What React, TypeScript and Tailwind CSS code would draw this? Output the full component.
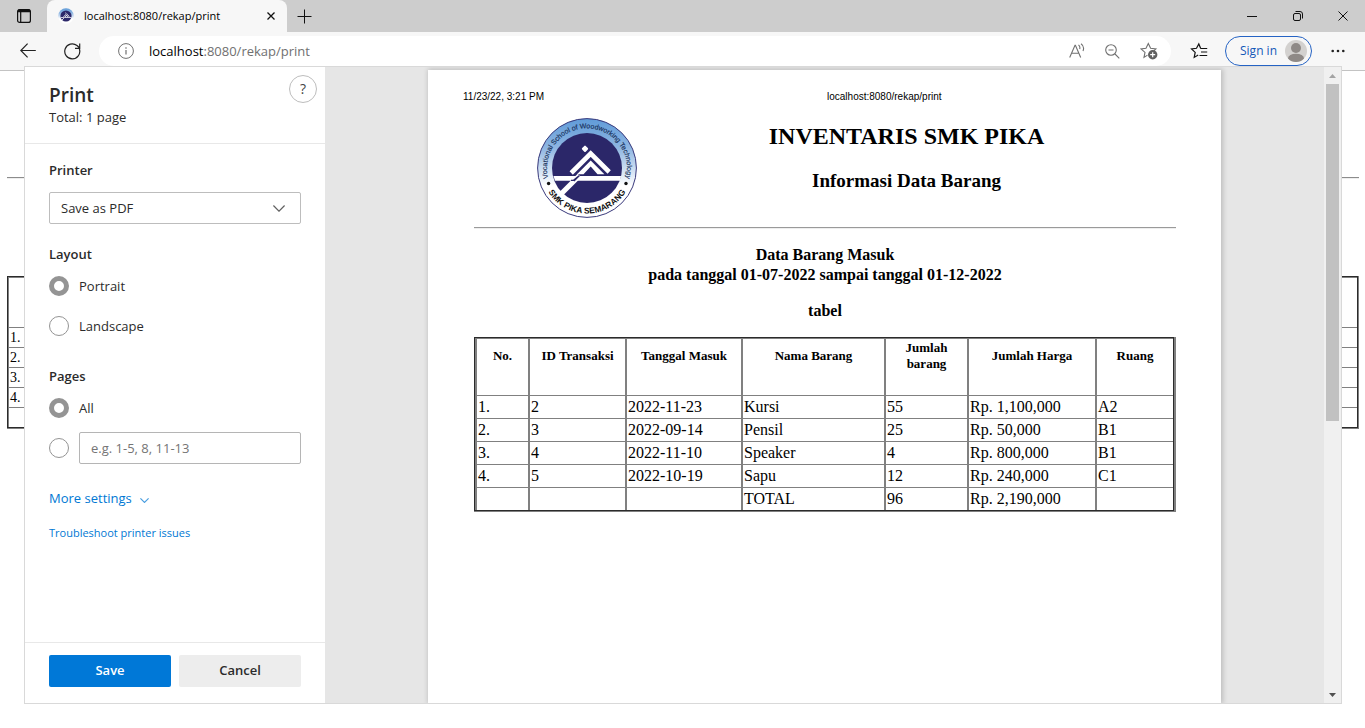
import React from "react";

const rows = [
  ["1.", "2", "2022-11-23", "Kursi", "55", "Rp. 1,100,000", "A2"],
  ["2.", "3", "2022-09-14", "Pensil", "25", "Rp. 50,000", "B1"],
  ["3.", "4", "2022-11-10", "Speaker", "4", "Rp. 800,000", "B1"],
  ["4.", "5", "2022-10-19", "Sapu", "12", "Rp. 240,000", "C1"],
  ["", "", "", "TOTAL", "96", "Rp. 2,190,000", ""],
];

const headings = [
  "No.",
  "ID Transaksi",
  "Tanggal Masuk",
  "Nama Barang",
  "Jumlah barang",
  "Jumlah Harga",
  "Ruang",
];

const columnWidths = [
  "w-[53px]",
  "w-[97px]",
  "w-[116px]",
  "w-[143px]",
  "w-[83px]",
  "w-[128px]",
  "w-[78px]",
];

function Emblem() {
  return (
    <g>
      <circle cx="50" cy="50" r="35" fill="#2b2769" />
      <path d="M16.5 58h67.5l-1 4.800h-65z" fill="#fff" />
      <path d="M42.500 57.500 24 76" stroke="#fff" strokeWidth="5.200" fill="none" />
      <path d="M34 62.300h2.500L42 57.700M37 63.200l5.500-5.500" stroke="#2b2769" strokeWidth="1.200" fill="none" />
      <path d="M34.200 55 53.700 35.500 72.200 54" stroke="#fff" strokeWidth="4.600" fill="none" />
      <path d="M40 56.200 53.700 42.500 67.400 56.200H60.500L53.700 48.500 46.500 56.200z" fill="#fff" />
      <rect x="45.500" y="28.300" width="5" height="5" rx="1" transform="rotate(45 48 30.800)" fill="#fff" />
    </g>
  );
}

function SchoolLogo() {
  return (
    <svg viewBox="0 0 100 100" className="size-[100px] shrink-0" role="img" aria-label="SMK PIKA Semarang">
      <defs>
        <linearGradient id="ring" x1="0" y1="0" x2="0" y2="1">
          <stop offset="0" stopColor="#5f9bd8" />
          <stop offset="0.3" stopColor="#8fb6e2" />
          <stop offset="0.68" stopColor="#fff" />
        </linearGradient>
        <path id="arc-top" d="M11.500 61.200A40 40 0 1 1 88.500 61.200" />
        <path id="arc-bottom" d="M8.200 68A45.500 45.500 0 0 0 91.800 68" />
      </defs>
      <circle cx="50" cy="50" r="49.400" fill="url(#ring)" stroke="#3a3a7c" strokeWidth="1" />
      <Emblem />
      <text fontFamily="Liberation Sans, sans-serif" fontSize="7" fill="#17305a" stroke="#17305a" strokeWidth="0.150">
        <textPath href="#arc-top" startOffset="50%" textAnchor="middle">
          Vocational School of Woodworking Technology
        </textPath>
      </text>
      <text fontFamily="Liberation Sans, sans-serif" fontSize="8.400" fontWeight="bold" fill="#111">
        <textPath href="#arc-bottom" startOffset="50%" textAnchor="middle">
          SMK PIKA SEMARANG
        </textPath>
      </text>
      <circle cx="11.600" cy="65.500" r="1.700" fill="#111" />
      <circle cx="89" cy="65.500" r="1.700" fill="#111" />
    </svg>
  );
}

function TitleBar() {
  return (
    <header className="flex h-8 bg-[#cdcdcd] text-black">
      <button aria-label="Tab actions" className="flex w-[47px] items-center justify-center">
        <svg viewBox="0 0 14 14" className="size-[14px]" fill="none" stroke="#111" strokeWidth="1.200">
          <rect x="0.600" y="0.600" width="12.800" height="12.800" rx="2" />
          <path d="M1 2.300h12M1 1.300h12" strokeWidth="1.800" />
          <path d="M3.700 3v10.500" />
        </svg>
      </button>
      <div className="flex w-60 items-center rounded-t-lg bg-[#f7f7f7] pl-[11px] pr-2">
        <svg viewBox="0 0 100 100" className="size-4" aria-hidden="true">
          <circle cx="50" cy="50" r="49" fill="url(#ring)" />
          <Emblem />
        </svg>
        <span className="ml-2.5 flex-1 text-[11px]">localhost:8080/rekap/print</span>
        <button aria-label="Close tab" className="flex size-4 items-center justify-center">
          <svg viewBox="0 0 8 8" className="size-2" stroke="#111" strokeWidth="1.300">
            <path d="M.5.5l7 7M7.500.5l-7 7" />
          </svg>
        </button>
      </div>
      <button aria-label="New tab" className="flex w-[34px] items-center justify-center">
        <svg viewBox="0 0 15 15" className="size-[15px]" stroke="#111" strokeWidth="1">
          <path d="M7.500.5v14M.5 7.500h14" />
        </svg>
      </button>
      <div className="flex flex-1 justify-end">
        <button aria-label="Minimize" className="flex w-[46px] items-center justify-center">
          <svg viewBox="0 0 10 10" className="size-[10px]" stroke="#111">
            <path d="M0 5.500h10" />
          </svg>
        </button>
        <button aria-label="Restore" className="flex w-[46px] items-center justify-center">
          <svg viewBox="0 0 10 10" className="size-[10px]" fill="none" stroke="#111">
            <rect x="0.500" y="2.500" width="7" height="7" rx="1.500" />
            <path d="M2.500.5h4.500a2.500 2.500 0 0 1 2.500 2.500v4.500" />
          </svg>
        </button>
        <button aria-label="Close window" className="flex w-11 items-center justify-center">
          <svg viewBox="0 0 10 10" className="size-[10px]" stroke="#111">
            <path d="M.5.5l9 9M9.500.5l-9 9" />
          </svg>
        </button>
      </div>
    </header>
  );
}

function Toolbar() {
  return (
    <nav className="flex h-[39px] items-start border-b border-[#c3c3c3] bg-[#f7f7f7] pt-1">
      <button aria-label="Back" className="ml-3 flex h-[30px] w-8 items-center justify-center">
        <svg viewBox="0 0 16 16" className="size-4" fill="none" stroke="#222" strokeWidth="1.200">
          <path d="M15.800 7.500H.8M7.600.7.8 7.500l6.800 6.800" />
        </svg>
      </button>
      <button aria-label="Refresh" className="ml-3 flex h-[30px] w-8 items-center justify-center">
        <svg viewBox="0 0 17 17" className="size-[17px]" fill="none" stroke="#222" strokeWidth="1.200">
          <path d="M15.400 6A7.500 7.500 0 1 1 13 2.500L15.500 4.800M15.700.5V5.300H11" />
        </svg>
      </button>
      <div className="ml-[11px] flex h-[30px] flex-1 items-center rounded-full bg-white pl-[19px] pr-[13px]">
        <svg viewBox="0 0 16 16" className="size-4" fill="none" stroke="#707070" strokeWidth="1">
          <circle cx="8" cy="8" r="7.400" />
          <path d="M8 7v4.500M8 4.300v1.400" strokeWidth="1.200" />
        </svg>
        <div role="textbox" aria-label="Address" className="ml-[15px] flex-1 text-[13px] leading-5 text-[#707070]">
          <span className="text-black">localhost</span>:8080/rekap/print
        </div>
        <div className="flex items-center gap-5 text-[#707070]">
          <button aria-label="Read aloud">
            <svg viewBox="0 0 16 16" className="size-4" fill="none" stroke="currentColor" strokeWidth="1.100">
              <path d="M.7 14.500 6 2.200h.4l5.300 12.300M2.700 10.200h7" />
              <path d="M9.500 1.800c1.200 1 1.700 2.600 1.200 4.300M12 .7c2.400 1.700 3 4.800 2 7.300" />
            </svg>
          </button>
          <button aria-label="Zoom out">
            <svg viewBox="0 0 15 15" className="size-[15px]" fill="none" stroke="currentColor" strokeWidth="1.100">
              <circle cx="6" cy="6" r="5.300" />
              <path d="M3.500 6h5M10 10l4.300 4.300" />
            </svg>
          </button>
          <button aria-label="Add to favorites">
            <svg viewBox="0 0 18 18" className="size-[18px]" fill="none" stroke="currentColor" strokeWidth="1.100">
              <path d="M7.500 13.100 4 15.400l1-5L1 6.900l5-.6L8.300 1.600l2.300 4.700 5.300.6-2 2" />
              <circle cx="12.700" cy="12.700" r="4.700" fill="#606060" stroke="none" />
              <path d="M12.700 10.200v5M10.200 12.700h5" stroke="#fff" strokeWidth="1.200" />
            </svg>
          </button>
        </div>
      </div>
      <button aria-label="Favorites" className="ml-[19px] flex h-[30px] w-[18px] items-center">
        <svg viewBox="0 0 18 18" className="size-[18px]" fill="none" stroke="#111" strokeWidth="1.200">
          <path d="M10.600 6.300 8.800 1.900 6.500 6.300 1.500 7l3.700 3.400-1 5L8.200 13" />
          <path d="M10.300 6.500h6.900M11 10h6.200M9.500 13.500h7.700" />
        </svg>
      </button>
      <button className="ml-[17px] flex h-[30px] w-[87px] items-center justify-between rounded-full border border-[#2563c4] pl-3.5 pr-1 text-xs text-[#1457b8]">
        <span>Sign in</span>
        <svg viewBox="0 0 22 22" className="size-[22px]" aria-hidden="true">
          <defs>
            <clipPath id="avatar-clip">
              <circle cx="11" cy="11" r="11" />
            </clipPath>
          </defs>
          <g clipPath="url(#avatar-clip)">
            <rect width="22" height="22" fill="#d3d1cf" />
            <circle cx="11" cy="8" r="5" fill="#8e8986" />
            <ellipse cx="11" cy="18.500" rx="8" ry="4.800" fill="#8e8986" />
          </g>
        </svg>
      </button>
      <button aria-label="Settings and more" className="mr-3 flex h-[30px] w-[41px] items-center justify-end">
        <svg viewBox="0 0 14 4" className="mr-2 h-1 w-[14px]" fill="#222">
          <circle cx="1.700" cy="2" r="1.300" />
          <circle cx="7" cy="2" r="1.300" />
          <circle cx="12.300" cy="2" r="1.300" />
        </svg>
      </button>
    </nav>
  );
}

function PageBehind() {
  return (
    <main className="flex-1 px-[7px] pr-1.5 pt-[106px] font-['Liberation_Serif',serif] text-black">
      <hr className="border-b border-t border-b-[#eeeeee] border-t-[#8c8c8c]" />
      <div className="mt-[97px] border-b border-r border-[#808080]">
        <table className="w-full table-fixed border-separate border-spacing-0 border border-[#2b2b2b] text-sm">
          <colgroup>
            <col className="w-20" />
            <col />
          </colgroup>
          <tbody>
            <tr>
              <td className="h-[50px] border-l border-t border-[#808080] p-0" />
              <td className="border-t border-[#808080] p-0" />
            </tr>
            {rows.map((row, i) => (
              <tr key={i}>
                <td className="h-5 border-l border-t border-[#808080] p-0 pl-px leading-[19px]">{row[0]}</td>
                <td className="border-t border-[#808080] p-0" />
              </tr>
            ))}
          </tbody>
        </table>
      </div>
    </main>
  );
}

const radioClass =
  "size-5 shrink-0 appearance-none rounded-full border border-[#949494] bg-white checked:border-[5px]";

function PrintSettings() {
  return (
    <form className="flex w-[300px] shrink-0 flex-col bg-white text-[#2b2b2b]" onSubmit={(e) => e.preventDefault()}>
      <div className="flex h-[77px] items-start justify-between border-b border-[#e8e8e8] pl-6 pr-2 pt-2">
        <div className="pt-1.5">
          <h1 id="print-title" className="text-[19px] leading-7 font-semibold">Print</h1>
          <p className="text-[13px] leading-4">Total: 1 page</p>
        </div>
        <button
          type="button"
          aria-label="Help"
          className="flex size-7 items-center justify-center rounded-full border border-[#bdbdbd] text-sm text-[#444]"
        >
          ?
        </button>
      </div>

      <div className="flex flex-1 flex-col px-6 pt-4 text-[13px] leading-5">
        <label htmlFor="printer" className="font-semibold">Printer</label>
        <div className="relative mt-3">
          <select
            id="printer"
            className="h-8 w-full appearance-none rounded-xs border border-[#bdbdbd] bg-white pl-[11px]"
          >
            <option>Save as PDF</option>
          </select>
          <svg
            viewBox="0 0 12 7"
            className="pointer-events-none absolute right-4 top-[13px] h-[7px] w-3"
            fill="none"
            stroke="#606060"
            strokeWidth="1.200"
          >
            <path d="M.4.500 6 6.200 11.600.5" />
          </svg>
        </div>

        <fieldset className="mt-5">
          <legend className="font-semibold">Layout</legend>
          <label className="mt-3 flex items-center gap-2.5">
            <input type="radio" name="layout" defaultChecked className={radioClass} />
            Portrait
          </label>
          <label className="mt-5 flex items-center gap-2.5">
            <input type="radio" name="layout" className={radioClass} />
            Landscape
          </label>
        </fieldset>

        <fieldset className="mt-[30px]">
          <legend className="font-semibold">Pages</legend>
          <label className="mt-3 flex items-center gap-2.5">
            <input type="radio" name="pages" defaultChecked className={radioClass} />
            All
          </label>
          <div className="mt-3.5 flex items-center gap-2.5">
            <input type="radio" name="pages" aria-label="Page range" className={radioClass} />
            <input
              type="text"
              aria-label="Pages to print"
              placeholder="e.g. 1-5, 8, 11-13"
              className="h-8 min-w-0 flex-1 rounded-xs border border-[#b5b5b5] px-[11px] placeholder:text-[#757575]"
            />
          </div>
        </fieldset>

        <button type="button" className="mt-6 flex items-center gap-2 self-start text-[#0078d4]">
          More settings
          <svg viewBox="0 0 9 5" className="mt-1 h-[5px] w-[9px]" fill="none" stroke="#4a9ee0" strokeWidth="1.200">
            <path d="M.4.400 4.500 4.400 8.600.4" />
          </svg>
        </button>
        <a href="#troubleshoot" className="mt-4 self-start text-[11px] leading-[18px] text-[#0078d4]">
          Troubleshoot printer issues
        </a>
      </div>

      <div className="flex gap-2 border-t border-[#e8e8e8] px-6 pb-4 pt-3 text-[13px] font-semibold">
        <button type="submit" className="h-8 flex-1 rounded-xs bg-[#0078d7] text-white">Save</button>
        <button type="button" className="h-8 flex-1 rounded-xs bg-[#ededed]">Cancel</button>
      </div>
    </form>
  );
}

function Report() {
  return (
    <article className="w-[793px] bg-white pl-[46px] pr-[45px] pt-5 font-['Liberation_Serif',serif] text-black shadow-[1px_0_5px_1px_rgba(0,0,0,0.18)]">
      <div className="-mx-[11px] grid grid-cols-2 gap-x-1 font-['Liberation_Sans',sans-serif] text-[10px] leading-[14px]">
        <span>11/23/22, 3:21 PM</span>
        <span>localhost:8080/rekap/print</span>
      </div>
      <div className="mt-3.5 flex pl-[63px]">
        <SchoolLogo />
        <div className="flex-1 pt-1 text-center font-bold">
          <h2 className="text-2xl leading-7">INVENTARIS SMK PIKA</h2>
          <h3 className="mt-[19px] text-[19px] leading-6">Informasi Data Barang</h3>
        </div>
      </div>
      <hr className="mt-[9px] border-b border-t border-b-[#eeeeee] border-t-[#9a9a9a]" />
      <div className="mt-4 text-center text-base leading-5 font-bold">
        <p>Data Barang Masuk</p>
        <p>pada tanggal 01-07-2022 sampai tanggal 01-12-2022</p>
        <p className="mt-4">tabel</p>
      </div>
      <div className="mt-4 border-b border-r-2 border-[#808080]">
        <table className="w-full table-fixed border-separate border-spacing-0 border border-[#2b2b2b]">
          <colgroup>
            {columnWidths.map((width) => (
              <col key={width} className={width} />
            ))}
          </colgroup>
          <thead>
            <tr>
              {headings.map((heading) => (
                <th
                  key={heading}
                  className="h-[57px] border-l-2 border-t border-[#808080] px-2 pb-[22px] pt-0 align-middle text-[13px] leading-4 font-bold"
                >
                  {heading}
                </th>
              ))}
            </tr>
          </thead>
          <tbody>
            {rows.map((row, i) => (
              <tr key={i}>
                {row.map((cell, j) => (
                  <td key={j} className="h-[23px] border-l-2 border-t border-[#808080] p-0 pl-px text-base leading-[22px]">
                    {cell}
                  </td>
                ))}
              </tr>
            ))}
          </tbody>
        </table>
      </div>
    </article>
  );
}

function Scrollbar() {
  return (
    <div className="flex w-[17px] shrink-0 flex-col bg-[#f0f0f0]">
      <button aria-label="Scroll up" className="flex h-[17px] items-center justify-center">
        <svg viewBox="0 0 7 4" className="h-1 w-[7px]" fill="#a3a3a3">
          <path d="M0 4 3.500 0 7 4z" />
        </svg>
      </button>
      <div className="flex-1 px-0.5">
        <div className="h-[56%] bg-[#c1c1c1]" />
      </div>
      <button aria-label="Scroll down" className="flex h-[17px] items-center justify-center">
        <svg viewBox="0 0 7 4" className="h-1 w-[7px]" fill="#505050">
          <path d="M0 0 3.500 4 7 0z" />
        </svg>
      </button>
    </div>
  );
}

export default function App() {
  return (
    <div className="relative flex min-h-screen flex-col bg-white font-['Open_Sans',sans-serif]">
      <TitleBar />
      <Toolbar />
      <PageBehind />
      <section
        role="dialog"
        aria-labelledby="print-title"
        className="absolute bottom-6 left-6 right-[23px] top-[66px] flex border border-[#d9d9d9] bg-[#e6e6e6]"
      >
        <PrintSettings />
        <div className="flex min-w-0 flex-1 justify-center overflow-hidden pt-[3px]">
          <Report />
        </div>
        <Scrollbar />
      </section>
    </div>
  );
}
